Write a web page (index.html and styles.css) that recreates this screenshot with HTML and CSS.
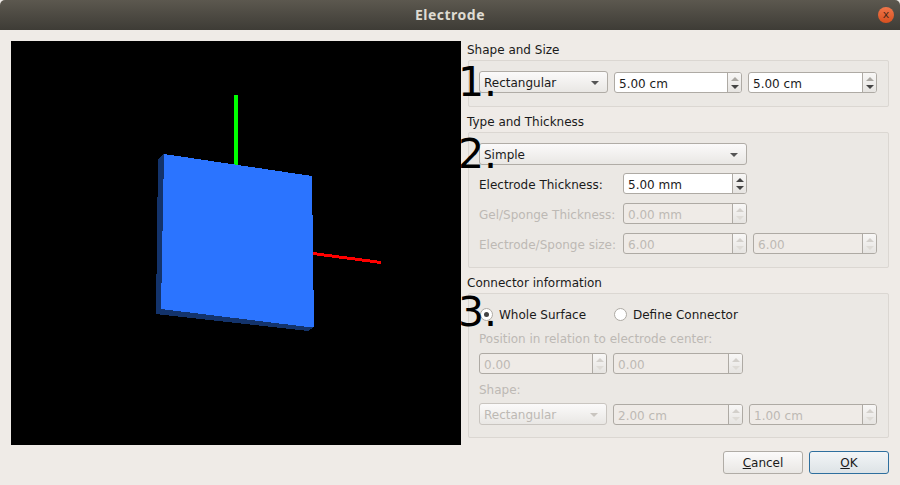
FILE: index.html
```html
<!DOCTYPE html>
<html lang="en">
<head>
  <meta charset="UTF-8" />
  <title>Electrode</title>
  <link rel="stylesheet" href="styles.css">
</head>
<body>

  <header class="titlebar">
    <span class="title">Electrode</span>
    <span class="close">x</span>
  </header>

  <main class="content">
    <svg class="viewport" width="450" height="404" viewBox="11 41 450 404" shape-rendering="crispEdges">
      <rect x="11" y="41" width="450" height="404" fill="#000" />
      <rect x="234" y="95" width="4" height="72" fill="#00ff00" />
      <polygon points="313,252 381,261 381,264 313,255" fill="#ff0000" />
      <polygon points="164,154 158,159 156,314 308,331 314,327 161,309" fill="#13336b" />
      <polygon points="164,154 312,176 314,327 308,327 161,309" fill="#2b74ff" />
    </svg>

    <div class="panel">
      <section class="section">
        <h2 class="section-title">Shape and Size</h2>
        <div class="group group-size">
          <span class="marker">1.</span>
          <div class="row row-size">
            <div class="combo combo-shape">Rectangular<i class="caret"></i></div>
            <div class="spin spin-a"><span class="value">5.00 cm</span><div class="arrows"><i class="up dim"></i><i class="down"></i></div></div>
            <div class="spin spin-b"><span class="value">5.00 cm</span><div class="arrows"><i class="up dim"></i><i class="down"></i></div></div>
          </div>
        </div>
      </section>

      <section class="section">
        <h2 class="section-title">Type and Thickness</h2>
        <div class="group group-type">
          <span class="marker">2.</span>
          <div class="combo combo-type">Simple<i class="caret"></i></div>
          <div class="row row-field">
            <label class="field-label">Electrode Thickness:</label>
            <div class="spin spin-wide"><span class="value">5.00 mm</span><div class="arrows"><i class="up"></i><i class="down"></i></div></div>
          </div>
          <div class="row row-field disabled">
            <label class="field-label">Gel/Sponge Thickness:</label>
            <div class="spin spin-wide"><span class="value">0.00 mm</span><div class="arrows"><i class="up"></i><i class="down"></i></div></div>
          </div>
          <div class="row row-field disabled">
            <label class="field-label">Electrode/Sponge size:</label>
            <div class="spin spin-wide"><span class="value">6.00</span><div class="arrows"><i class="up"></i><i class="down"></i></div></div>
            <div class="spin spin-last"><span class="value">6.00</span><div class="arrows"><i class="up"></i><i class="down"></i></div></div>
          </div>
        </div>
      </section>

      <section class="section">
        <h2 class="section-title">Connector information</h2>
        <div class="group group-connector">
          <span class="marker marker-high">3.</span>
          <div class="radios">
            <span class="radio checked"></span><span class="radio-label">Whole Surface</span>
            <span class="radio"></span><span class="radio-label">Define Connector</span>
          </div>
          <div class="disabled connector-details">
            <p class="note">Position in relation to electrode center:</p>
            <div class="row row-pos">
              <div class="spin spin-c"><span class="value">0.00</span><div class="arrows"><i class="up"></i><i class="down"></i></div></div>
              <div class="spin spin-d"><span class="value">0.00</span><div class="arrows"><i class="up"></i><i class="down"></i></div></div>
            </div>
            <p class="note note-shape">Shape:</p>
            <div class="row row-pos">
              <div class="combo combo-c">Rectangular<i class="caret"></i></div>
              <div class="spin spin-d"><span class="value">2.00 cm</span><div class="arrows"><i class="up"></i><i class="down"></i></div></div>
              <div class="spin spin-e"><span class="value">1.00 cm</span><div class="arrows"><i class="up"></i><i class="down"></i></div></div>
            </div>
          </div>
        </div>
      </section>
    </div>
  </main>

  <footer class="buttons">
    <button class="btn" type="button"><u>C</u>ancel</button>
    <button class="btn btn-default" type="button"><u>O</u>K</button>
  </footer>

</body>
</html>
```

FILE: styles.css
```css
* {
  box-sizing: border-box;
}
body {
  margin: 0;
  width: 900px;
  height: 485px;
  overflow: hidden;
  background-color: #efebe7;
  color: #1a1a1a;
  font-family: "DejaVu Sans", sans-serif;
  font-size: 12px;
}

/* window title */
.titlebar {
  height: 30px;
  padding-bottom: 2px;
  display: flex;
  align-items: center;
  justify-content: center;
  position: relative;
  background: linear-gradient(#5c584f, #3e3c36);
  border-radius: 5px 5px 0 0;
}
.title {
  font-family: "Noto Sans", sans-serif;
  font-weight: bold;
  font-size: 14px;
  letter-spacing: 0.5px;
  color: #dfdbd2;
}
.close {
  position: absolute;
  left: 878px;
  top: 7px;
  width: 16px;
  height: 16px;
  border-radius: 50%;
  background: linear-gradient(#f0764a, #d8501f);
  color: #4a2a1a;
  font-size: 11px;
  line-height: 15px;
  text-align: center;
}

.content {
  display: flex;
  gap: 6px;
  padding: 11px 11px 0 11px;
}
.viewport {
  display: block;
  flex: none;
}
.panel {
  width: 422px;
  display: flex;
  flex-direction: column;
  gap: 7px;
  margin-top: 1px;
}

.section-title {
  margin: 0 0 2px 0;
  font-size: 12px;
  font-weight: normal;
  line-height: 16px;
}
.group {
  position: relative;
  margin-left: 1px;
  background-color: #ebe8e4;
  border: 1px solid #dbd7d2;
  border-radius: 2px;
  padding: 0 11px 0 10px;
}
.group-size {
  height: 47px;
  padding-top: 10px;
}
.group-type {
  height: 136px;
  padding-top: 10px;
}
.group-connector {
  height: 145px;
  padding-top: 10px;
}

/* big numbers laid over the groups */
.marker {
  position: absolute;
  left: -11px;
  top: -3px;
  font-size: 41px;
  line-height: 48px;
  color: #000;
}
.marker-high {
  top: -6px;
}

.row {
  display: flex;
  align-items: flex-end;
}
.row-size {
  gap: 6px;
}
.row-field {
  margin-top: 8px;
  align-items: center;
}
.row-field + .row-field {
  margin-top: 9px;
}
.row-pos {
  gap: 6px;
}
.field-label {
  width: 144px;
  flex: none;
  padding-top: 3px;
}

.combo {
  height: 22px;
  flex: none;
  display: flex;
  align-items: center;
  justify-content: space-between;
  padding: 2px 8px 0 4px;
  background: linear-gradient(#fbfafa, #e9e7e4);
  border: 1px solid #b0aca6;
  border-radius: 3px;
}
.caret {
  width: 0;
  height: 0;
  border-left: 4px solid transparent;
  border-right: 4px solid transparent;
  border-top: 4px solid #555;
}
.combo-shape {
  width: 129px;
}
.combo-type {
  width: 268px;
}
.combo-c {
  width: 128px;
}

.spin {
  height: 21px;
  flex: none;
  display: flex;
  justify-content: space-between;
  background-color: #fff;
  border: 1px solid #aeaaa4;
  border-radius: 3px;
}
.value {
  padding: 1px 0 0 4px;
  line-height: 21px;
}
.arrows {
  width: 14px;
  display: flex;
  flex-direction: column;
  align-items: center;
  justify-content: center;
  gap: 4px;
  background: linear-gradient(#f8f7f6, #e6e4e1);
  border-left: 1px solid #aeaaa4;
  border-radius: 0 2px 2px 0;
}
.up,
.down {
  width: 0;
  height: 0;
  border-left: 4px solid transparent;
  border-right: 4px solid transparent;
}
.up {
  border-bottom: 4px solid #444;
}
.down {
  border-top: 4px solid #444;
}
.up.dim {
  border-bottom-color: #aaa7a2;
}
.spin-a {
  width: 128px;
}
.spin-b {
  width: 129px;
}
.spin-wide {
  width: 124px;
}
.spin-last {
  width: 124px;
  margin-left: 6px;
}
.spin-c {
  width: 128px;
}
.spin-d {
  width: 130px;
}
.spin-e {
  width: 128px;
}

.disabled {
  color: #bdb9b4;
}
.disabled .spin {
  background-color: #efebe7;
}
.disabled .combo {
  border-color: #c9c5c0;
}
.disabled .up {
  border-bottom-color: #d3d0cb;
}
.disabled .down {
  border-top-color: #dedbd6;
}
.disabled .caret {
  border-top-color: #c9c5c0;
}

.radios {
  height: 20px;
  display: flex;
  align-items: center;
}
.radio {
  width: 13px;
  height: 13px;
  flex: none;
  margin-left: 1px;
  background-color: #fff;
  border: 1px solid #aeaaa4;
  border-radius: 50%;
  display: flex;
  align-items: center;
  justify-content: center;
}
.radio.checked::after {
  content: "";
  width: 5px;
  height: 5px;
  border-radius: 50%;
  background-color: #444;
}
.radio-label {
  margin-left: 6px;
  padding-top: 1px;
  width: 114px;
}
.note {
  margin: 8px 0 7px 0;
  line-height: 14px;
}
.note-shape {
  margin: 9px 0 6px 0;
}

.buttons {
  position: absolute;
  top: 451px;
  left: 723px;
  display: flex;
  gap: 6px;
}
.btn {
  width: 80px;
  height: 23px;
  padding: 0;
  font-family: "DejaVu Sans", sans-serif;
  font-size: 12px;
  color: #1a1a1a;
  background: linear-gradient(#fbfafa, #e9e7e4);
  border: 1px solid #b0aca6;
  border-radius: 3px;
}
.btn-default {
  background: linear-gradient(#f2f5f7, #dde3e6);
  border-color: #2e6f9e;
}
```
